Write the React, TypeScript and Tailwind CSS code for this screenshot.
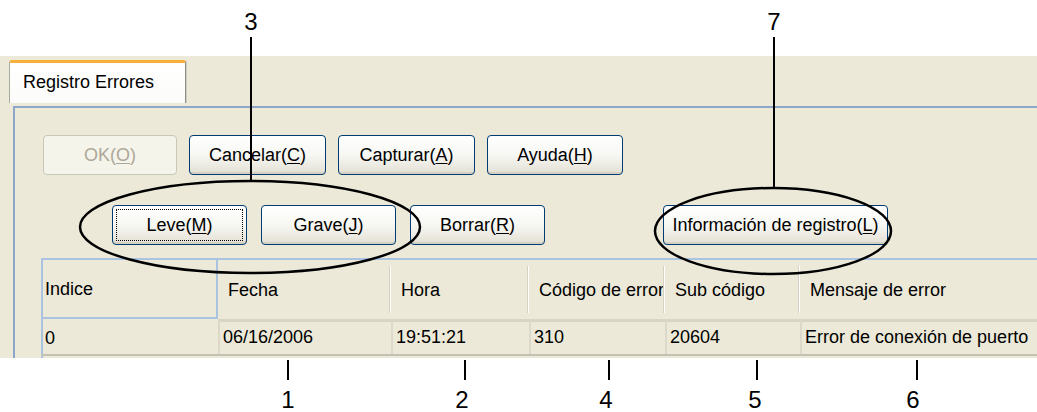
import React from "react";

const FONT = "font-['Liberation_Sans',Arial,sans-serif]";

function XpButton({
  label,
  mnemonic,
  after,
  width,
  disabled = false,
  focused = false,
}: {
  label: string;
  mnemonic: string;
  after?: string;
  width: string;
  disabled?: boolean;
  focused?: boolean;
}) {
  const frame = disabled
    ? "border-[#c9c7ba] bg-[#f5f4ea] text-[#aca899]"
    : "border-[#003c74] bg-gradient-to-b from-white via-[#f7f7f3] to-[#e3e0d4] text-black shadow-[inset_0_-2px_0_#d6d0c2,inset_0_1px_0_#ffffff]";
  return (
    <div className={`flex h-[40px] ${width} items-center justify-center rounded-[4px] border p-[3px] ${frame}`}>
      <div
        className={`flex h-full w-full items-center justify-center ${
          focused ? "border border-dotted border-black" : "border border-transparent"
        }`}
      >
        <span className="text-[18px] leading-none">
          {label}(<u className="underline-offset-2">{mnemonic}</u>){after}
        </span>
      </div>
    </div>
  );
}

function HeaderCell({ text, width, first = false }: { text: string; width: string; first?: boolean }) {
  if (first) {
    return (
      <div className={`flex h-full ${width} shrink-0 items-center border-2 border-t-0 border-[#a9c3e1] pl-[2px]`}>
        <span>{text}</span>
      </div>
    );
  }
  return (
    <div className={`flex h-full ${width} shrink-0 items-center pl-[10px] relative`}>
      <span className="whitespace-nowrap">{text}</span>
      <div className="absolute right-0 top-[6px] bottom-[6px] w-[2px] border-l border-[#d5d1c3] bg-white" />
    </div>
  );
}

function DataCell({ text, width, first = false }: { text: string; width: string; first?: boolean }) {
  if (first) {
    return (
      <div className={`flex h-full ${width} shrink-0 items-center border-l-2 border-[#a9c3e1] pl-[2px]`}>
        <span className="pt-[2px]">{text}</span>
      </div>
    );
  }
  return (
    <div
      className={`flex h-full ${width} shrink-0 items-center border-t-[3px] border-l-2 border-t-[#d8d4c6] border-l-[#dcd8ca] pl-[3px]`}
    >
      <span className="-mt-[3px] whitespace-nowrap">{text}</span>
    </div>
  );
}

export default function App() {
  return (
    <div className={`relative h-[412px] w-[1037px] overflow-hidden bg-white text-black ${FONT}`}>
      <div className="h-[56px]" />

      <div className="h-[302px] overflow-hidden bg-[#ece9d8]">
        <div className="pl-[9px] pt-[4px]">
          <div className="flex h-[43px] w-[177px] items-center rounded-t-[3px] border-x border-l-[#a7a99e] border-r-[#8d8f85] border-t-[3px] border-t-[#f7b03c] bg-gradient-to-b from-white to-[#fbfbf9] pl-[13px] shadow-[1px_0_0_#d0cdc0]">
            <span className="-mt-[3px] text-[18px] leading-none">Registro Errores</span>
          </div>
        </div>

        <div className="ml-[13px] mt-[3px] border-l-2 border-t-2 border-[#8ba6c6] pb-4">
          <div className="flex gap-[12px] pl-[28px] pt-[27px]">
            <XpButton label="OK" mnemonic="O" width="w-[134px]" disabled />
            <XpButton label="Cancelar" mnemonic="C" width="w-[137px]" />
            <XpButton label="Capturar" mnemonic="A" width="w-[137px]" />
            <XpButton label="Ayuda" mnemonic="H" width="w-[136px]" />
          </div>

          <div className="mt-[30px] flex pl-[97px]">
            <XpButton label="Leve" mnemonic="M" width="w-[135px]" focused />
            <div className="ml-[14px]">
              <XpButton label="Grave" mnemonic="J" width="w-[135px]" />
            </div>
            <div className="ml-[14px]">
              <XpButton label="Borrar" mnemonic="R" width="w-[135px]" />
            </div>
            <div className="ml-[118px]">
              <XpButton label="Información de registro" mnemonic="L" width="w-[225px]" />
            </div>
          </div>

          <div className="ml-[26px] mt-[13px] text-[18px] leading-none">
            <div className="flex h-[61px] border-t-2 border-[#a9c3e1]">
              <HeaderCell text="Indice" width="w-[177px]" first />
              <HeaderCell text="Fecha" width="w-[173px]" />
              <HeaderCell text="Hora" width="w-[138px]" />
              <HeaderCell text="Código de error" width="w-[136px]" />
              <HeaderCell text="Sub código" width="w-[135px]" />
              <div className="flex h-full flex-1 items-center pl-[10px]">
                <span className="whitespace-nowrap">Mensaje de error</span>
              </div>
            </div>
            <div className="flex h-[37px] border-b-2 border-[#c4c0b2]">
              <DataCell text="0" width="w-[177px]" first />
              <DataCell text="06/16/2006" width="w-[173px]" />
              <DataCell text="19:51:21" width="w-[138px]" />
              <DataCell text="310" width="w-[136px]" />
              <DataCell text="20604" width="w-[135px]" />
              <DataCell text="Error de conexión de puerto" width="w-[300px]" />
            </div>
            <div className="h-[10px] border-l-2 border-[#a9c3e1]" />
          </div>
        </div>
      </div>

      <svg
        className="pointer-events-none absolute inset-0"
        width="1037"
        height="412"
        viewBox="0 0 1037 412"
        fill="none"
        stroke="black"
      >
        <line x1="251" y1="37" x2="251" y2="182" strokeWidth="2" />
        <line x1="774" y1="37" x2="774" y2="189" strokeWidth="2" />
        <ellipse cx="250" cy="227" rx="170" ry="46" strokeWidth="2.5" />
        <ellipse cx="773" cy="231" rx="118" ry="43" strokeWidth="2.5" />
        <line x1="288" y1="360" x2="288" y2="380" strokeWidth="2" />
        <line x1="465" y1="360" x2="465" y2="380" strokeWidth="2" />
        <line x1="609" y1="360" x2="609" y2="380" strokeWidth="2" />
        <line x1="757" y1="360" x2="757" y2="380" strokeWidth="2" />
        <line x1="917" y1="360" x2="917" y2="380" strokeWidth="2" />
      </svg>

      <div className="pointer-events-none absolute left-[231px] top-[10px] w-[40px] text-center text-[24px] leading-none">3</div>
      <div className="pointer-events-none absolute left-[754px] top-[10px] w-[40px] text-center text-[24px] leading-none">7</div>
      <div className="pointer-events-none absolute left-[268px] top-[388px] w-[40px] text-center text-[24px] leading-none">1</div>
      <div className="pointer-events-none absolute left-[442px] top-[388px] w-[40px] text-center text-[24px] leading-none">2</div>
      <div className="pointer-events-none absolute left-[586px] top-[388px] w-[40px] text-center text-[24px] leading-none">4</div>
      <div className="pointer-events-none absolute left-[735px] top-[388px] w-[40px] text-center text-[24px] leading-none">5</div>
      <div className="pointer-events-none absolute left-[893px] top-[388px] w-[40px] text-center text-[24px] leading-none">6</div>
    </div>
  );
}
